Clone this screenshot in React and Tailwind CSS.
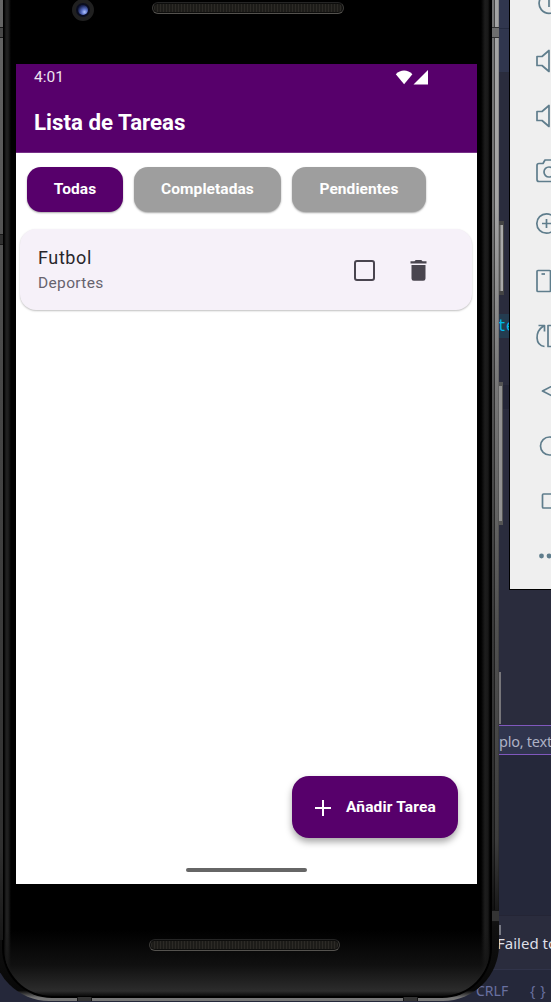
import React from "react";

const toolIcons = [
  <g key="power"><path d="M10.5 .6a9.900 9.900 0 1 0 9 0" /><path d="M15 -2v15" /></g>,
  <path key="volume-up" d="M3 7.5h5l7-6v21l-7-6H3z" />,
  <path key="volume-down" d="M3 7.5h5l7-6v21l-7-6H3z" />,
  <g key="camera"><path d="M26 4.500h-2l-2-3.500h-11L9 4.500H5a2 2 0 0 0-2 2v14a2 2 0 0 0 2 2h20" /><circle cx="15" cy="13" r="5" /></g>,
  <g key="zoom"><circle cx="12.500" cy="9.500" r="9.700" /><path d="M8 9.500h9M12.500 5v9" /></g>,
  <g key="fold"><rect x="3" y="1.500" width="13.500" height="21" rx="1" /><path d="M7.500 5h3.500" /></g>,
  <g key="rotate"><path d="M10.500 22.500C1 21 .500 8 9.500 2M4.500 1.500h6v6" /><path d="M20 1.500h-6v21h6" /></g>,
  <path key="back" d="M24 4 8.500 12 24 20" />,
  <circle key="home" cx="15.500" cy="12" r="9" />,
  <rect key="overview" x="8.500" y="5" width="15" height="14" rx="1" />,
  <g key="more" fill="#5f7d8c" stroke="none"><circle cx="7.500" cy="12" r="2.400" /><circle cx="15" cy="12" r="2.400" /></g>,
];

function Editor() {
  return (
    <div className="flex h-full flex-col bg-[#2a2c3d]">
      <div className="flex h-[72px] flex-col justify-start bg-[#30364e]">
        <div className="mt-[28px] h-px bg-[#252b40]" />
      </div>
      <div className="h-[242px] border-t border-[#292c3c]" />
      <div className="h-6 bg-[#243c50] pl-[497px] font-['DejaVu_Sans_Mono',monospace] text-[15px] leading-[24px] text-[#00b9e8]">te</div>
      <div className="mt-[47px] h-[24px] bg-[#242637]" />
      <div className="mt-[263px] flex h-[52px] pl-[499px]"><div className="w-[2px] bg-[#77767a]" /></div>
      <div className="mt-px h-[30px] border-y border-[#8058bd] bg-[#30354e] pl-[499px] font-['Noto_Sans'] text-[14.500px] leading-[31px] tracking-[-0.25px] whitespace-nowrap text-[#adb1c4]">plo, text</div>
      <div className="h-[160px] bg-[#25283a]" />
      <div className="h-[54px] border-t border-[#242535] bg-[#2a2c3d] pl-[497px]">
        <div className="ml-[2px] mt-[9px] h-[10px] w-[2px] bg-[#777983]" />
        <div className="font-['Noto_Sans'] text-[15px] leading-[17px] whitespace-nowrap text-[#dedfe6]">Failed to</div>
      </div>
      <div className="flex h-[33px] items-center border-t border-[#303349] bg-[#25283a] pl-[476px] pt-[10px] font-['Noto_Sans'] text-[14px] leading-none text-[#6970a0]">
        <span className="w-[54px]">CRLF</span><span className="tracking-[5px]">{"{}"}</span>
      </div>
    </div>
  );
}

function Speaker({ className }) {
  return (
    <div className={`h-[12px] rounded-full border border-[#3d3c39] border-t-[#252525] border-b-[#54524e] bg-[#0d0d0c] p-px ${className}`}>
      <div className="h-full rounded-full bg-[repeating-linear-gradient(90deg,#2c2a26_0px,#2c2a26_1px,#1d1c19_1px,#1d1c19_3px)]" />
    </div>
  );
}

function StatusIcons() {
  return (
    <svg width="34" height="16" viewBox="0 0 34 16" fill="white">
      <path d="M.8 4.200C5.500-.7 12.700-.7 17.400 4.200L9.100 14.200z" />
      <path d="M33 0v14.500H18.500z" />
    </svg>
  );
}

function Filter({ label, className }) {
  return (
    <button className={`h-[45px] rounded-[14px] pt-px text-[15.500px] font-bold tracking-[0.07px] text-white shadow-[0_1px_2px_rgba(0,0,0,0.35)] ${className}`}>{label}</button>
  );
}

function TaskApp() {
  return (
    <div className="flex h-[820px] w-[461px] flex-col bg-white font-['Roboto',sans-serif]">
      <header className="h-[89px] border-b border-[#763087] bg-[#57006b] pl-[18px] pr-[48px] text-white">
        <div className="flex h-[26px] items-center justify-between pt-px text-[15.500px] text-[#eee4f0]">
          <span>4:01</span><StatusIcons />
        </div>
        <h1 className="mt-[16px] text-[22.300px] leading-[32px] font-bold">Lista de Tareas</h1>
      </header>
      <nav className="flex gap-[11px] pl-[11px] pt-[14px]">
        <Filter label="Todas" className="w-[96px] bg-[#57006b]" />
        <Filter label="Completadas" className="w-[147px] bg-[#9e9e9e]" />
        <Filter label="Pendientes" className="w-[134px] bg-[#9e9e9e]" />
      </nav>
      <article className="mr-[5px] ml-[4px] mt-[17px] flex h-[81px] items-center rounded-[16px] bg-[#f6f1f9] pt-px pl-[18px] pr-[45px] shadow-[0_1px_2px_rgba(0,0,0,0.25)]">
        <div className="flex-1">
          <div className="text-[18px] leading-[26px] tracking-[0.6px] text-[#28262b]">Futbol</div>
          <div className="text-[15.500px] leading-[24px] tracking-[0.35px] text-[#67636e]">Deportes</div>
        </div>
        <div className="mr-[35px] h-[21px] w-[21px] rounded-[3px] border-2 border-[#49454f]" />
        <svg width="17" height="21" viewBox="0 0 17 21" fill="#49454f"><path d="M.500 1.200h4L5.700 0h5.600l1.200 1.200h4v2.200H.500zM1.500 5h14v13.500a2.300 2.300 0 0 1-2.300 2.300H3.800a2.300 2.300 0 0 1-2.300-2.300z" /></svg>
      </article>
      <div className="mt-auto flex justify-end pr-[19px]">
        <button className="flex h-[62px] w-[166px] items-center rounded-[17px] bg-[#57006b] pt-px pl-[23px] text-[15.500px] font-bold tracking-[0.15px] whitespace-nowrap text-white shadow-[0_4px_7px_rgba(0,0,0,0.35)]">
          <svg className="mr-[15px]" width="16" height="16" viewBox="0 0 16 16" stroke="white" strokeWidth="2"><path d="M0 8h16M8 0v16" /></svg>
          Añadir Tarea
        </button>
      </div>
      <div className="flex h-[46px] justify-center pt-[30px]"><div className="h-[4px] w-[121px] rounded-full bg-[#666]" /></div>
    </div>
  );
}

function Phone() {
  return (
    <div className="relative h-full w-[499px]">
      <div className="absolute -top-[60px] -left-[7px] flex h-[1061px] w-[506px] overflow-hidden rounded-b-[56px] bg-[linear-gradient(180deg,#a4a4a4_0%,#a4a4a4_25%,#777_42%,#505050_65%,#3c3c3c_85%,#101010_93%,#080808_99%,#777_99.700%)] pr-[7px] pb-[3px] pl-[9px]">
        <div className="flex-1 rounded-b-[50px] border-x-2 border-b-2 border-black bg-[linear-gradient(90deg,#000_0px,#202020_2px,#202020_4px,#000_7px,#000_477px,#1d1d1d_481px,#191919_484px,#000_486px)]">
          <div className="h-full rounded-b-[48px] bg-[linear-gradient(180deg,transparent_0px,transparent_990px,rgba(20,20,20,.8)_1025px,#2c2c2c_1051px,#0b0b0b_1056px)]" />
        </div>
      </div>
      <div className="absolute top-0 left-[491px] h-[916px] w-[8px] bg-[linear-gradient(90deg,rgba(0,0,0,.65)_0px,rgba(0,0,0,.3)_1px,rgba(0,0,0,.3)_3px,rgba(0,0,0,.6)_3px,rgba(0,0,0,.6)_4px,transparent_4px,transparent_7px,rgba(0,0,0,.3)_8px)]" />
      <div className="absolute top-[27px] left-[492px] h-[11px] w-[7px] border-y border-[#303030] bg-[#6e6e6e]" />
      <div className="absolute top-0 left-0 h-[940px] w-[3px] bg-[linear-gradient(180deg,#666_0%,#484848_40%,#303030_90%,#181818_100%)]" />
      <div className="absolute top-[27px] left-0 h-[11px] w-[3px] border-y border-[#191919] bg-[#484848]" />
      <div className="absolute top-[234px] left-0 h-[11px] w-[3px] border-y border-[#191919] bg-[#303030]" />
      <div className="absolute top-[910px] left-[492px] h-[12px] w-[7px] border-y border-[#151515] bg-[#343434]" />
      <div className="absolute top-[997px] left-[77px] h-[4px] w-[15px] border-x border-[#161616] bg-[#343434]" />
      <div className="absolute top-[997px] left-[403px] h-[4px] w-[15px] border-x border-[#161616] bg-[#343434]" />
      <div className="absolute top-[221px] left-[499px] h-[74px] w-[5px] border-y-[4px] border-r border-[#444] bg-[linear-gradient(90deg,#555_0px,#555_1px,#aaa_2px)]" />
      <div className="absolute top-[382px] left-[499px] h-[143px] w-[4px] border-y-[4px] border-r border-[#555] bg-[#929292]" />
      <div className="absolute -top-px left-[72px] flex h-[22px] w-[22px] items-center justify-center rounded-full border-[4px] border-[#202020] bg-[#0a0d1f]">
        <div className="h-[10px] w-[10px] rounded-full bg-[radial-gradient(circle_at_65%_70%,#b4c6ff_0%,#5a70c4_30%,#17204e_70%)]" />
      </div>
      <Speaker className="absolute top-[2px] left-[152px] w-[192px]" />
      <Speaker className="absolute top-[939px] left-[149px] w-[191px]" />
      <div className="relative pt-[64px] pl-[16px]"><TaskApp /></div>
    </div>
  );
}

function Toolbar() {
  return (
    <aside className="absolute top-0 left-[509px] h-[590px] w-[42px] overflow-hidden border-b border-l border-black bg-[#efefef]">
      <div className="-mt-[22px] flex flex-col pl-[24px]">
        {toolIcons.map((icon) => (
          <div key={icon.key} className="flex h-[55px] shrink-0 items-center">
            <svg width="26" height="24" viewBox="0 0 26 24" className="shrink-0 overflow-visible" fill="none" stroke="#5f7d8c" strokeWidth="1.7" strokeLinejoin="round">{icon}</svg>
          </div>
        ))}
      </div>
    </aside>
  );
}

export default function App() {
  return (
    <main className="relative h-[1002px] w-[551px] overflow-hidden">
      <Editor />
      <div className="absolute inset-0"><Phone /></div>
      <Toolbar />
    </main>
  );
}
